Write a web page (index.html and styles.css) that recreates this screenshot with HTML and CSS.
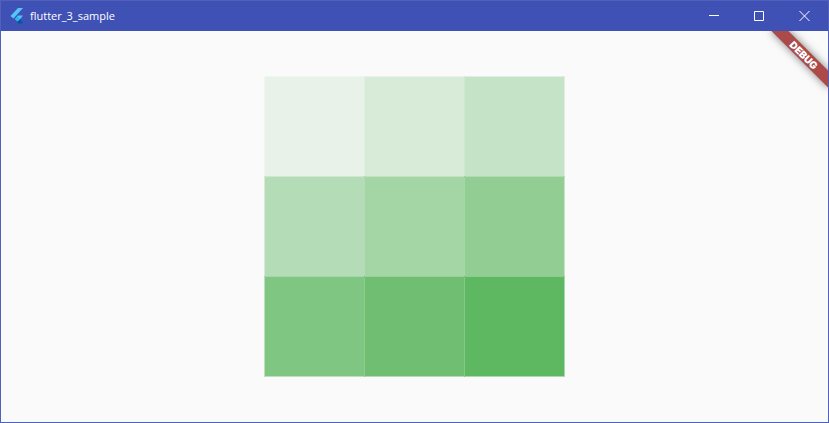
FILE: index.html
```html
<!DOCTYPE html>
<html lang="en">
<head>
<meta charset="utf-8">
<title>flutter_3_sample</title>
<link rel="stylesheet" href="styles.css">
</head>
<body>
<div class="window">
  <header class="titlebar">
    <svg class="logo" viewBox="0 0 16 16" aria-hidden="true">
      <path fill="#54c5f8" d="M9 0h5L4.500 10.500 1.500 8z"/>
      <path fill="#54c5f8" d="M9 7.400h5L11.300 11.100 8.700 13.500 6 11.100z"/>
      <path fill="#29b6f6" d="M6 11.100l2.700-2.500 2.600 2.500-2.600 2.500z"/>
      <path fill="#01579b" d="M8.700 13.600l2.600-2.500L14 15.500H9.500L8 14z"/>
    </svg>
    <h1 class="title">flutter_3_sample</h1>
    <div class="controls">
      <button class="control" aria-label="Minimize"><svg viewBox="0 0 10 10"><path d="M0 4.500h10"/></svg></button>
      <button class="control" aria-label="Maximize"><svg viewBox="0 0 10 10"><path d="M.5.5h9v9h-9z"/></svg></button>
      <button class="control" aria-label="Close"><svg viewBox="0 0 10 10"><path d="M.5 0l10 10M10.500 0l-10 10"/></svg></button>
    </div>
  </header>
  <main class="content">
    <div class="swatches">
      <div class="swatch s1"></div>
      <div class="swatch s2"></div>
      <div class="swatch s3"></div>
      <div class="swatch s4"></div>
      <div class="swatch s5"></div>
      <div class="swatch s6"></div>
      <div class="swatch s7"></div>
      <div class="swatch s8"></div>
      <div class="swatch s9"></div>
    </div>
    <div class="banner">DEBUG</div>
  </main>
</div>
</body>
</html>
```
FILE: styles.css
```css
* {
  box-sizing: border-box;
}

body {
  margin: 0;
  font-family: "Open Sans", "Noto Sans", sans-serif;
}

.window {
  display: flex;
  flex-direction: column;
  min-height: 100vh;
  border: 1px solid #5161bb;
}

.titlebar {
  display: flex;
  align-items: center;
  height: 30px;
  padding: 0 2px 0 8px;
  background: #3f51b5;
  color: #fff;
}

.logo {
  width: 16px;
  height: 16px;
}

.title {
  flex: 1;
  margin: 0 0 0 5px;
  font-size: 11px;
  font-weight: 400;
  line-height: 16px;
}

.controls {
  display: flex;
  height: 100%;
}

.control {
  display: grid;
  place-items: center;
  width: 45px;
  padding: 0;
  border: 0;
  background: none;
}

.control svg {
  width: 10px;
  height: 10px;
  overflow: visible;
  fill: none;
  stroke: #fff;
}

.content {
  position: relative;
  display: flex;
  flex: 1;
  align-items: center;
  justify-content: center;
  overflow: hidden;
  background: #fafafa;
}

.swatches {
  display: grid;
  grid-template-columns: repeat(3, 99px);
  grid-auto-rows: 99px;
  gap: 1px;
  padding: 1px;
}

/* Neighbouring half-strength edges overlap in the one-pixel gaps. */
.swatch {
  background: rgb(76 175 80 / var(--alpha));
  box-shadow: 0 0 0 1px rgb(76 175 80 / calc(var(--alpha) / 2));
}

.s1 { --alpha: 0.1; }
.s2 { --alpha: 0.2; }
.s3 { --alpha: 0.3; }
.s4 { --alpha: 0.4; }
.s5 { --alpha: 0.5; }
.s6 { --alpha: 0.6; }
.s7 { --alpha: 0.7; }
.s8 { --alpha: 0.8; }
.s9 { --alpha: 0.9; }

.banner {
  position: absolute;
  top: 28px;
  right: -40px;
  width: 80px;
  height: 12px;
  transform: rotate(45deg);
  transform-origin: 50% -28px;
  background: #ac4a4a;
  box-shadow: 0 0 8px rgb(0 0 0 / 0.5);
  color: #fff;
  font-family: Inter, "Open Sans", sans-serif;
  font-size: 10px;
  font-weight: 900;
  line-height: 12px;
  text-align: center;
}
```
